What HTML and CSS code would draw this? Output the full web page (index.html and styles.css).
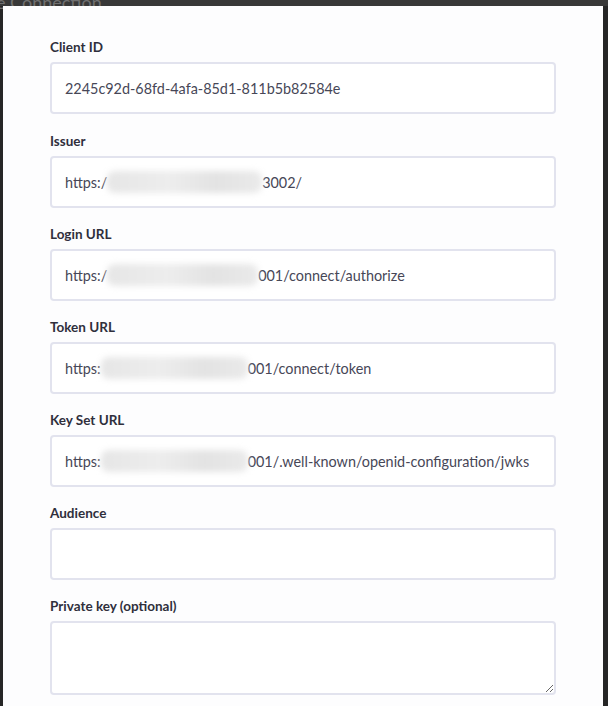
FILE: index.html
```html
<!DOCTYPE html>
<html lang="en">
<head>
  <meta charset="UTF-8">
  <title>Connection settings</title>
  <link rel="stylesheet" href="styles.css">
</head>
<body>

<div class="backdrop-title">e Connection</div>

<div class="modal">
  <div class="field">
    <label>Client ID</label>
    <div class="input">2245c92d-68fd-4afa-85d1-811b5b82584e</div>
  </div>

  <div class="field">
    <label>Issuer</label>
    <div class="input">https:/<span class="redact r-issuer"></span>3002/</div>
  </div>

  <div class="field">
    <label>Login URL</label>
    <div class="input">https:/<span class="redact r-login"></span>001/connect/authorize</div>
  </div>

  <div class="field">
    <label>Token URL</label>
    <div class="input">https:<span class="redact r-token"></span>001/connect/token</div>
  </div>

  <div class="field">
    <label>Key Set URL</label>
    <div class="input">https:<span class="redact r-token"></span>001/.well-known/openid-configuration/jwks</div>
  </div>

  <div class="field">
    <label>Audience</label>
    <div class="input"></div>
  </div>

  <div class="field">
    <label>Private key (optional)</label>
    <textarea class="textarea"></textarea>
  </div>
</div>

</body>
</html>
```

FILE: styles.css
```css
* {
  margin: 0;
  padding: 0;
  box-sizing: border-box;
}

html, body {
  height: 100%;
  overflow: hidden;
}

body {
  background: #262626;
  font-family: Lato, "Noto Sans", sans-serif;
  padding: 6px 5px 0 3px;
}

body::before {
  content: "";
  position: absolute;
  top: 0;
  left: 0;
  right: 0;
  height: 6px;
  background: #383838;
}

.backdrop-title {
  position: absolute;
  top: -7px;
  left: -4px;
  font-size: 18px;
  line-height: 18px;
  color: #707070;
  z-index: 1;
}

.modal {
  position: relative;
  z-index: 2;
  background: #fdfdfe;
  padding: 31px 47px 0 47px;
  height: 720px;
}

.field {
  margin-bottom: 16px;
}

.field:first-child {
  margin-bottom: 17px;
}

.field label {
  display: block;
  font-size: 13.5px;
  font-weight: bold;
  line-height: 20px;
  color: #2f2f3c;
  margin-bottom: 5px;
}

.input {
  height: 52px;
  border: 2px solid #e2e3ee;
  border-radius: 4px;
  background: #fff;
  padding: 0 13px;
  display: flex;
  align-items: center;
  font-size: 14.4px;
  color: #474757;
  white-space: nowrap;
}

.textarea {
  display: block;
  width: 100%;
  height: 74px;
  border: 2px solid #e2e3ee;
  border-radius: 4px;
  background: #fff;
  resize: vertical;
  font-family: inherit;
}

.redact {
  display: inline-block;
  height: 22px;
  background: linear-gradient(to right, #e6e6e6, #ededed 40%, #e3e3e3 70%, #eaeaea);
  filter: blur(3px);
  border-radius: 8px;
}

.r-issuer {
  width: 155px;
}

.r-login {
  width: 151px;
}

.r-token {
  width: 147px;
}
```
